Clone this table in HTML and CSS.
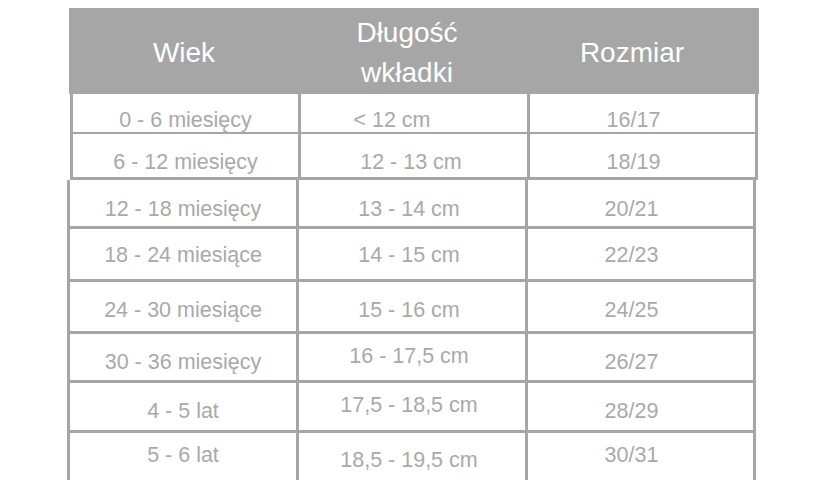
FILE: index.html
```html
<!DOCTYPE html>
<html lang="pl">
<head>
<meta charset="utf-8">
<title>Tabela rozmiarów</title>
<link rel="stylesheet" href="styles.css">
</head>
<body>
<div class="chart">
  <div class="head">
    <div class="hcell">Wiek</div>
    <div class="hcell hmid">Długość<br>wkładki</div>
    <div class="hcell hright">Rozmiar</div>
  </div>

  <div class="block block-top">
    <div class="row r1">
      <div class="cell">0 - 6 miesięcy</div>
      <div class="cell mid first">&lt; 12 cm</div>
      <div class="cell right">16/17</div>
    </div>
    <div class="row r2">
      <div class="cell">6 - 12 miesięcy</div>
      <div class="cell mid">12 - 13 cm</div>
      <div class="cell right">18/19</div>
    </div>
  </div>

  <div class="block block-bottom">
    <div class="row r3">
      <div class="cell">12 - 18 miesięcy</div>
      <div class="cell mid">13 - 14 cm</div>
      <div class="cell right">20/21</div>
    </div>
    <div class="row r4">
      <div class="cell">18 - 24 miesiące</div>
      <div class="cell mid">14 - 15 cm</div>
      <div class="cell right">22/23</div>
    </div>
    <div class="row r5">
      <div class="cell">24 - 30 miesiące</div>
      <div class="cell mid">15 - 16 cm</div>
      <div class="cell right">24/25</div>
    </div>
    <div class="row r6">
      <div class="cell">30 - 36 miesięcy</div>
      <div class="cell mid raise">16 - 17,5 cm</div>
      <div class="cell right">26/27</div>
    </div>
    <div class="row r7">
      <div class="cell">4 - 5 lat</div>
      <div class="cell mid raise">17,5 - 18,5 cm</div>
      <div class="cell right">28/29</div>
    </div>
    <div class="row r8">
      <div class="cell">5 - 6 lat</div>
      <div class="cell mid lower">18,5 - 19,5 cm</div>
      <div class="cell right">30/31</div>
    </div>
  </div>
</div>
</body>
</html>
```

FILE: styles.css
```css
html, body {
  margin: 0;
  padding: 0;
  background: #ffffff;
  overflow: hidden;
}

body {
  font-family: "Liberation Sans", Arial, sans-serif;
  width: 840px;
  height: 480px;
}

.chart {
  padding-top: 8px;
}

.head {
  margin-left: 69px;
  width: 690px;
  height: 86px;
  background: #a6a6a6;
  display: grid;
  grid-template-columns: 230px 230px 230px;
  color: #ffffff;
  font-size: 28px;
  line-height: 40px;
}

.hcell {
  display: flex;
  align-items: center;
  justify-content: center;
  text-align: center;
  padding-top: 4px;
}

.hmid {
  padding-right: 14px;
}

.hright {
  padding-right: 24px;
}

.block {
  background: #a6a6a6;
  display: flex;
  flex-direction: column;
  gap: 3px;
}

.block-top {
  margin-left: 70px;
  width: 682px;
  padding: 0 3px 3px 3px;
}

.block-bottom {
  margin-left: 67px;
  width: 683px;
  padding: 0 3px;
}

.row {
  display: grid;
  column-gap: 3px;
}

.block-top .row {
  grid-template-columns: 225px 226px 225px;
}

.block-bottom .row {
  grid-template-columns: 226px 226px 225px;
}

.cell {
  background: #ffffff;
  color: #a9a9a9;
  font-size: 21.5px;
  line-height: 24px;
  text-align: center;
  white-space: nowrap;
  padding-top: var(--pt, 14px);
}

.mid {
  padding-right: 6px;
}

.mid.first {
  padding-right: 44px;
}

.right {
  padding-right: 18px;
}

.r1 { height: 37px; --pt: 14px; }
.r2 { height: 43px; --pt: 16px; }
.r3 { height: 46px; --pt: 17px; }
.r4 { height: 50px; --pt: 14px; }
.r5 { height: 49px; --pt: 16px; }
.r6 { height: 46px; --pt: 16px; }
.r7 { height: 47px; --pt: 16px; }
.r8 { height: 47px; --pt: 10px; }

.r6 .raise,
.r7 .raise {
  padding-top: 10px;
}

.r8 .lower {
  padding-top: 15px;
}

.cell {
  box-sizing: border-box;
}
```
